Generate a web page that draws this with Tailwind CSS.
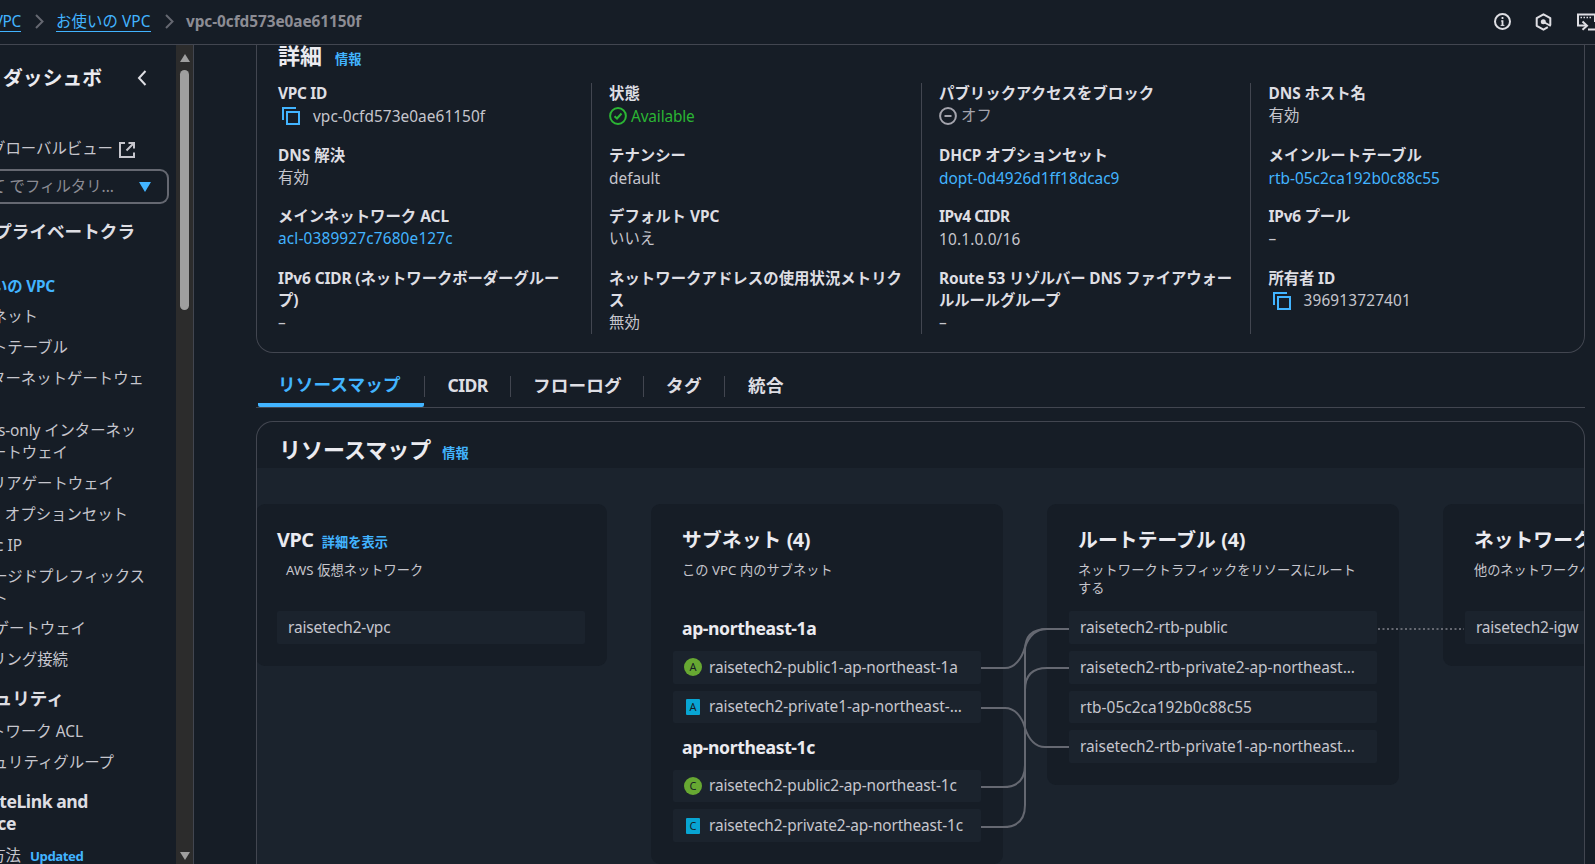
<!DOCTYPE html>
<html lang="ja">
<head>
<meta charset="utf-8">
<title>VPC</title>
<script src="https://cdn.jsdelivr.net/npm/@tailwindcss/browser@4"></script>
</head>
<body class="w-[1595px] h-[864px] overflow-hidden flex flex-col bg-[#161d26] text-[#c6c6cd] text-[15.4px] leading-[22px] font-['Noto_Sans','Noto_Sans_CJK_JP',sans-serif]">

<header class="h-[45px] shrink-0 border-b border-[#424650] flex items-center justify-between whitespace-nowrap">
  <nav class="flex items-center h-[22px] -mt-px">
    <div class="w-[21px] flex justify-end shrink-0"><a class="text-[#42b4ff] border-b border-[#42b4ff] h-[21px] leading-[22px] tracking-[-0.3px]">VPC</a></div>
    <svg class="w-[9px] h-[15px] ml-3.5" viewBox="0 0 9 15" fill="none" stroke="#656871" stroke-width="2"><path d="M1 1l6.5 6.5L1 14"/></svg>
    <a class="ml-3 w-[95px] text-[#42b4ff] border-b border-[#42b4ff] h-[21px] leading-[22px] tracking-[0.08px]">お使いの VPC</a>
    <svg class="w-[9px] h-[15px] ml-3.5" viewBox="0 0 9 15" fill="none" stroke="#656871" stroke-width="2"><path d="M1 1l6.5 6.5L1 14"/></svg>
    <span class="ml-[12px] mt-px font-bold text-[#8c8c94] tracking-[-0.07px]">vpc-0cfd573e0ae61150f</span>
  </nav>
  <div class="w-[101px] shrink-0 flex items-center gap-6 overflow-hidden text-[#dedee3] -mt-px">
    <svg class="w-[17px] h-[17px] shrink-0" viewBox="0 0 17 17" fill="none" stroke="currentColor" stroke-width="2"><circle cx="8.5" cy="8.5" r="7.5"/><path d="M8.5 7.2v5.3M8.5 4v2" stroke-width="1.8"/><path d="M7 8h1.500M6.600 12.400h3.800" stroke-width="1"/></svg>
    <svg class="w-[17px] h-[18px] shrink-0" viewBox="0 0 17 18" fill="none" stroke="currentColor" stroke-width="2"><path d="M15.300 12V5.200L8.500 1.300 1.700 5.200v7.600l6.800 3.900 4.300-2.500" stroke-linejoin="round"/><circle cx="8.300" cy="8.700" r="2.500" fill="currentColor" stroke="none"/><path d="M8.600 9l7.200 4"/></svg>
    <svg class="w-[22px] h-[18px] shrink-0" viewBox="0 0 22 18" fill="none" stroke="currentColor" stroke-width="2"><path d="M10 12.500H2V1.500H19V9"/><path d="M4.500 4.500h1.500m1.500 0h1.500m1.500 0h1.500m1.500 0h1.500" stroke-width="1.6"/><path d="M6.500 8.500L11 12.700l-4.500 4"/><path d="M12 16.500h8"/></svg>
  </div>
</header>

<div class="flex flex-1 min-h-0">
  <!-- Side navigation, scrolled sideways -->
  <aside class="w-[176px] shrink-0 overflow-hidden whitespace-nowrap flex flex-col items-start">
    <div class="flex items-center h-6 mt-[21px] shrink-0">
      <div class="w-[102px] flex justify-end font-bold text-[19.8px] text-[#ebebf0]">ダッシュボ</div>
      <svg class="w-[10px] h-4 ml-[35px]" viewBox="0 0 10 16" fill="none" stroke="#dedee3" stroke-width="2"><path d="M8.500 1L2 8l6.500 7"/></svg>
    </div>
    <div class="flex items-center h-[22px] mt-[48px] shrink-0">
      <div class="w-[113px] flex justify-end">グローバルビュー</div>
      <svg class="w-4 h-4 ml-1.5 mt-0.5" viewBox="0 0 16 16" fill="none" stroke="#c6c6cd" stroke-width="2"><path d="M6 1H1v14h14v-4.500M9.500 1H15v5.500M15 1L7.500 8.500"/></svg>
    </div>
    <div class="w-[169px] h-[35px] mt-[9px] shrink-0 border-2 border-l-0 border-[#656871] rounded-r-[9px] flex items-center">
      <div class="w-[114px] flex justify-end text-[#8c8c94]"><span>て</span><span class="ml-1">でフィルタリ...</span></div>
      <div class="ml-[25px] w-0 h-0 border-x-[6px] border-x-transparent border-t-[10px] border-t-[#42b4ff]"></div>
    </div>
    <div class="w-[135px] h-[22px] mt-[16px] shrink-0 flex justify-end font-bold text-[17.6px] text-[#dedee3]">プライベートクラ</div>
    <div class="w-[55px] h-[22px] mt-[34px] shrink-0 flex justify-end font-bold text-[#42b4ff] tracking-[-0.2px]">使いの VPC</div>
    <div class="flex flex-col gap-[8.8px] mt-[8px] shrink-0">
      <div class="w-[38px] flex justify-end">サブネット</div>
      <div class="w-[68px] flex justify-end">ルートテーブル</div>
      <div class="w-[144px] h-11 flex justify-end">インターネットゲートウェ</div>
      <div class="w-[136px] flex flex-col">
        <div class="flex justify-end tracking-[-0.1px]">Egress-only インターネッ</div>
        <div class="w-[68px] flex justify-end">トゲートウェイ</div>
      </div>
      <div class="w-[114px] flex justify-end">キャリアゲートウェイ</div>
      <div class="w-[128px] flex justify-end">DHCP&nbsp; オプションセット</div>
      <div class="w-[22px] flex justify-end">Elastic IP</div>
      <div class="w-[145px] flex flex-col">
        <div class="flex justify-end">マネージドプレフィックス</div>
        <div class="w-[8px] flex justify-end">リスト</div>
      </div>
      <div class="w-[86px] flex justify-end">NAT ゲートウェイ</div>
      <div class="w-[68px] flex justify-end">ピアリング接続</div>
    </div>
    <div class="w-[64px] h-[22px] mt-[16px] shrink-0 flex justify-end font-bold text-[17.6px] text-[#dedee3]">セキュリティ</div>
    <div class="w-[83px] mt-3 shrink-0 flex justify-end">ネットワーク ACL</div>
    <div class="w-[114px] mt-[9px] shrink-0 flex justify-end">セキュリティグループ</div>
    <div class="w-[88px] mt-[16px] shrink-0 flex flex-col font-bold text-[17.6px] text-[#dedee3] tracking-[-0.45px]">
      <div class="flex justify-end">PrivateLink and</div>
      <div class="w-[16px] flex justify-end">Lattice</div>
    </div>
    <div class="flex items-center h-[22px] mt-[11px] shrink-0">
      <div class="w-[21px] flex justify-end">開始方法</div>
      <span class="ml-[9px] font-bold text-[13.2px] text-[#42b4ff] tracking-[-0.45px]">Updated</span>
    </div>
  </aside>

  <!-- Scrollbar -->
  <div class="w-[18px] shrink-0 bg-[#2c2c2c] border-r border-[#424650] flex flex-col items-center">
    <div class="w-0 h-0 mt-[9px] border-x-[5.500px] border-x-transparent border-b-8 border-b-[#9f9f9f]"></div>
    <div class="w-[9px] h-[240px] mt-2 rounded-full bg-[#9f9f9f]"></div>
    <div class="w-0 h-0 mt-auto mb-1 border-x-[5.500px] border-x-transparent border-t-8 border-t-[#9f9f9f]"></div>
  </div>

  <main class="ml-[62px] w-[1329px] flex flex-col shrink-0">
    <!-- Details -->
    <section class="h-[308px] shrink-0 border border-t-0 border-[#424650] rounded-b-[17px] pl-[21px] pr-[22px] overflow-hidden">
      <div class="h-6 -mt-px flex items-center whitespace-nowrap">
        <h2 class="text-[22px] font-bold text-[#ebebf0] -mt-0.5">詳細</h2>
        <a class="ml-[13px] mt-[5px] text-[13.2px] font-bold text-[#42b4ff]">情報</a>
      </div>
      <div class="mt-[15px] h-[251px] grid grid-cols-[314px_330px_329px_310px]">
        <div class="border-r border-[#424650] flex flex-col gap-[17.6px] pr-5">
          <div><div class="font-bold text-[#dedee3] tracking-[-0.3px]">VPC ID</div>
            <div class="flex items-center h-[22px] tracking-[0.05px]"><svg class="w-[18px] h-[18px] ml-[4px] mr-[13px]" viewBox="0 0 18 18" fill="none" stroke="#42b4ff" stroke-width="2"><path d="M1 13V1h13"/><path d="M5 5h12v12H5z"/></svg><span class="mt-px">vpc-0cfd573e0ae61150f</span></div></div>
          <div><div class="font-bold text-[#dedee3]">DNS 解決</div><div>有効</div></div>
          <div><div class="font-bold text-[#dedee3]">メインネットワーク ACL</div><div class="text-[#42b4ff] tracking-[0.15px]">acl-0389927c7680e127c</div></div>
          <div><div class="font-bold text-[#dedee3] tracking-[-0.1px]">IPv6 CIDR (ネットワークボーダーグルー<br>プ)</div><div>–</div></div>
        </div>
        <div class="border-r border-[#424650] flex flex-col gap-[17.6px] pl-[17px]">
          <div><div class="font-bold text-[#dedee3]">状態</div>
            <div class="flex items-center h-[22px] text-[#2bb534] tracking-[-0.15px]"><svg class="w-[18px] h-[18px] mr-1" viewBox="0 0 18 18" fill="none" stroke="currentColor" stroke-width="2"><circle cx="9" cy="9" r="7.900"/><path d="M5.500 9.200l2.500 2.300 4.500-5"/></svg><span class="mt-px">Available</span></div></div>
          <div><div class="font-bold text-[#dedee3]">テナンシー</div><div class="relative top-px">default</div></div>
          <div><div class="font-bold text-[#dedee3]">デフォルト VPC</div><div>いいえ</div></div>
          <div><div class="font-bold text-[#dedee3] whitespace-nowrap tracking-[0.03px]">ネットワークアドレスの使用状況メトリク<br>ス</div><div>無効</div></div>
        </div>
        <div class="border-r border-[#424650] flex flex-col gap-[17.6px] pl-[17px]">
          <div><div class="font-bold text-[#dedee3] tracking-[0.03px]">パブリックアクセスをブロック</div>
            <div class="flex items-center h-[22px] text-[#a4a4ad]"><svg class="w-[18px] h-[18px] mr-1" viewBox="0 0 18 18" fill="none" stroke="currentColor" stroke-width="2"><circle cx="9" cy="9" r="7.900"/><path d="M5.500 9h7"/></svg>オフ</div></div>
          <div><div class="font-bold text-[#dedee3] tracking-[-0.05px]">DHCP オプションセット</div><div class="relative top-px text-[#42b4ff]">dopt-0d4926d1ff18dcac9</div></div>
          <div><div class="font-bold text-[#dedee3] tracking-[-0.4px]">IPv4 CIDR</div><div class="relative top-px tracking-[0.15px]">10.1.0.0/16</div></div>
          <div><div class="font-bold text-[#dedee3] whitespace-nowrap tracking-[-0.12px]">Route 53 リゾルバー DNS ファイアウォー<br>ルルールグループ</div><div>–</div></div>
        </div>
        <div class="flex flex-col gap-[17.6px] pl-[17.5px]">
          <div><div class="font-bold text-[#dedee3] tracking-[-0.05px]">DNS ホスト名</div><div>有効</div></div>
          <div><div class="font-bold text-[#dedee3] tracking-[0.05px]">メインルートテーブル</div><div class="relative top-px text-[#42b4ff] tracking-[0.03px]">rtb-05c2ca192b0c88c55</div></div>
          <div><div class="font-bold text-[#dedee3] tracking-[-0.2px]">IPv6 プール</div><div>–</div></div>
          <div><div class="font-bold text-[#dedee3] tracking-[-0.15px]">所有者 ID</div>
            <div class="flex items-center h-[22px] tracking-[0.15px]"><svg class="w-[18px] h-[18px] ml-[4px] mr-[13px]" viewBox="0 0 18 18" fill="none" stroke="#42b4ff" stroke-width="2"><path d="M1 13V1h13"/><path d="M5 5h12v12H5z"/></svg>396913727401</div></div>
        </div>
      </div>
    </section>

    <!-- Tabs -->
    <div class="h-[55px] shrink-0 border-b border-[#424650] flex items-end font-bold text-[17.6px] text-[#dedee3] whitespace-nowrap">
      <div class="ml-[2px] w-[166px] h-[45px] pt-[11px] pl-[20px] border-b-4 border-[#42b4ff] rounded-b-[2px] text-[#42b4ff] tracking-[0.15px]">リソースマップ</div>
      <div class="h-[45px] pt-[13px] flex leading-[18px] -mb-px">
        <span class="h-[21px] w-[86px] border-l border-[#424650] pl-[22.5px] tracking-[-0.6px]">CIDR</span>
        <span class="h-[21px] w-[133px] border-l border-[#424650] pl-[22px] tracking-[0.15px]">フローログ</span>
        <span class="h-[21px] w-[81px] border-l border-[#424650] pl-[22px] tracking-[0.3px]">タグ</span>
        <span class="h-[21px] border-l border-[#424650] pl-[23px] tracking-[0.3px]">統合</span>
      </div>
    </div>

    <!-- Resource map -->
    <section class="mt-[13px] flex-1 min-h-0 border border-b-0 border-[#424650] rounded-t-[17px] overflow-hidden flex flex-col">
      <div class="h-[46px] shrink-0 pt-[7px] pl-[22px] flex items-center whitespace-nowrap">
        <h2 class="text-[22px] font-bold text-[#ebebf0]">リソースマップ</h2>
        <a class="ml-[11px] mt-2 text-[13.2px] font-bold text-[#42b4ff]">情報</a>
      </div>
      <div class="relative flex-1 min-h-0 bg-[#1b232d] pt-9 flex items-start whitespace-nowrap">
        <div class="w-[351px] h-[162px] -ml-px shrink-0 bg-[#161d26] rounded-[9px] pl-[21px] pt-[25px] pr-[22px]">
          <div class="h-[22px] flex items-center"><h3 class="text-[19.8px] font-bold text-[#ebebf0] tracking-[-0.4px]">VPC</h3><a class="ml-2 mt-1 text-[13.2px] font-bold text-[#42b4ff] tracking-[0.1px]">詳細を表示</a></div>
          <div class="mt-2.5 pl-[9px] text-[13.2px] leading-[18px] tracking-[0.08px]">AWS 仮想ネットワーク</div>
          <div class="mt-8 h-[33px] w-[308px] bg-[#1b232d] rounded-[2px] pl-[11px] leading-[33px] tracking-[-0.13px]">raisetech2-vpc</div>
        </div>

        <div class="w-[352px] h-[360px] ml-[44px] shrink-0 bg-[#161d26] rounded-[9px] px-[22px] pt-[25px] tracking-[-0.13px]">
          <h3 class="pl-[9px] h-[22px] text-[19.8px] font-bold text-[#ebebf0] tracking-[0.1px]">サブネット <span class="tracking-[-0.5px]">(4)</span></h3>
          <div class="mt-2.5 pl-[9px] text-[13.2px] leading-[18px] tracking-[0.08px]">この VPC 内のサブネット</div>
          <h4 class="mt-[38px] pl-[9px] h-[22px] text-[17.6px] font-bold text-[#ebebf0] tracking-[-0.4px]">ap-northeast-1a</h4>
          <div class="mt-[12px] h-[33px] bg-[#1b232d] rounded-[2px] pl-[11px] flex items-center"><span class="w-[18px] h-[18px] -mt-px rounded-full bg-[#67a832] text-[#161d26] text-[11px] leading-[18px] text-center">A</span><span class="ml-[7px]">raisetech2-public1-ap-northeast-1a</span></div>
          <div class="mt-[7px] h-[32px] bg-[#1b232d] rounded-[2px] pl-[13px] flex items-center"><span class="w-[14px] h-4 rounded-[1px] bg-[#08a5d3] text-[#161d26] text-[11px] leading-4 text-center">A</span><span class="ml-[9px] tracking-[-0.05px]">raisetech2-private1-ap-northeast-...</span></div>
          <h4 class="mt-[13px] pl-[9px] h-[22px] text-[17.6px] font-bold text-[#ebebf0] tracking-[-0.4px]">ap-northeast-1c</h4>
          <div class="mt-[12px] h-[32px] bg-[#1b232d] rounded-[2px] pl-[11px] flex items-center"><span class="w-[18px] h-[18px] rounded-full bg-[#67a832] text-[#161d26] text-[11px] leading-[18px] text-center">C</span><span class="ml-[7px] tracking-[-0.12px]">raisetech2-public2-ap-northeast-1c</span></div>
          <div class="mt-[7px] h-[33px] bg-[#1b232d] rounded-[2px] pl-[13px] flex items-center"><span class="w-[14px] h-4 rounded-[1px] bg-[#08a5d3] text-[#161d26] text-[11px] leading-4 text-center">C</span><span class="ml-[9px]">raisetech2-private2-ap-northeast-1c</span></div>
        </div>

        <div class="w-[352px] h-[281px] ml-[44px] shrink-0 bg-[#161d26] rounded-[9px] px-[22px] pt-[25px] tracking-[-0.03px]">
          <h3 class="pl-[9px] h-[22px] text-[19.8px] font-bold text-[#ebebf0] tracking-[0.1px]">ルートテーブル <span class="tracking-[-0.3px]">(4)</span></h3>
          <div class="mt-2.5 pl-[9px] text-[13.2px] leading-[18px] tracking-[0.1px]">ネットワークトラフィックをリソースにルート<br>する</div>
          <div class="mt-[14px] flex flex-col gap-[7px] leading-[33px]">
            <div class="h-[33px] bg-[#1b232d] rounded-[2px] pl-[11px] tracking-[-0.1px]">raisetech2-rtb-public</div>
            <div class="h-[33px] bg-[#1b232d] rounded-[2px] pl-[11px]">raisetech2-rtb-private2-ap-northeast...</div>
            <div class="h-[32px] bg-[#1b232d] rounded-[2px] pl-[11px] tracking-[0.05px]">rtb-05c2ca192b0c88c55</div>
            <div class="h-[33px] bg-[#1b232d] rounded-[2px] pl-[11px]">raisetech2-rtb-private1-ap-northeast...</div>
          </div>
        </div>

        <div class="w-[352px] h-[162px] ml-[44px] shrink-0 bg-[#161d26] rounded-[9px] px-[22px] pt-[25px] tracking-[-0.13px]">
          <h3 class="pl-[9px] h-[22px] text-[19.8px] font-bold text-[#ebebf0] tracking-normal">ネットワーク接続 (1)</h3>
          <div class="mt-2.5 pl-[9px] text-[13.2px] leading-[18px] tracking-normal">他のネットワークへの接続</div>
          <div class="mt-8 h-[33px] bg-[#1b232d] rounded-[2px] pl-[11px] leading-[33px] tracking-[-0.2px]">raisetech2-igw</div>
        </div>

        <!-- Connections between resources -->
        <svg class="absolute left-0 top-0 w-[1327px] h-[396px]" viewBox="257 468 1327 396" fill="none" stroke="#656871" stroke-width="2">
          <path d="M981 668H1005C1015 668 1022 658 1025 647C1029 636 1036 629 1047 629H1069"/>
          <path d="M981 787H1003Q1025 787 1025 765V650Q1025 629 1047 629"/>
          <path d="M981 827H1003Q1025 827 1025 805V690Q1025 668 1047 668H1069"/>
          <path d="M981 708H1005C1015 708 1022 717 1025 728C1029 740 1036 747 1045 747H1069"/>
          <path d="M1378 629H1464" stroke-dasharray="2 2.500"/>
        </svg>
      </div>
    </section>
  </main>
</div>
</body>
</html>
